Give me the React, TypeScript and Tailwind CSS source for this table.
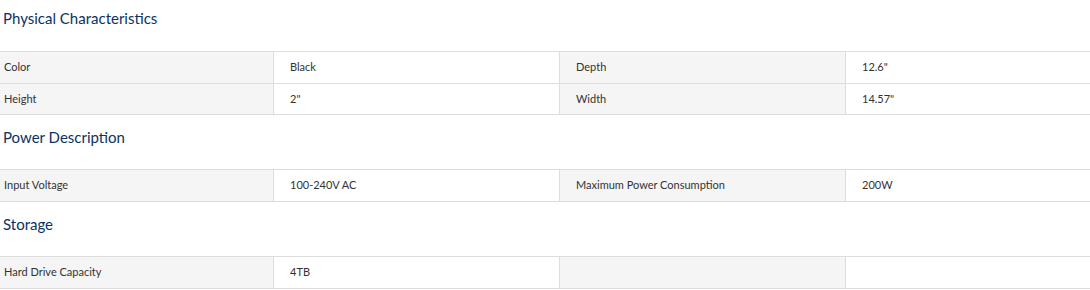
const sections = [
  {
    title: "Physical Characteristics",
    rows: [
      ["Color", "Black", "Depth", '12.6"'],
      ["Height", '2"', "Width", '14.57"'],
    ],
  },
  {
    title: "Power Description",
    rows: [["Input Voltage", "100-240V AC", "Maximum Power Consumption", "200W"]],
  },
  {
    title: "Storage",
    rows: [["Hard Drive Capacity", "4TB", "", ""]],
  },
];

export default function App() {
  return (
    <main className="w-[1090px] h-[290px] overflow-hidden bg-white font-['Lato',sans-serif] text-[#333333]">
      {sections.map((section, i) => (
        <section key={section.title}>
          {/* heading */}
          <h3
            className={
              i === 0
                ? "h-[51px] pt-[8px] pl-[3px] text-[15px] leading-[20px] text-[#0b3263]"
                : "h-[54px] pt-[12px] pl-[3px] text-[15px] leading-[20px] text-[#0b3263]"
            }
          >
            {section.title}
          </h3>

          {/* spec table */}
          <div className="border-t border-[#dddddd]">
            {section.rows.map((row, r) => (
              <div
                key={r}
                className={
                  r === 1
                    ? "grid grid-cols-[274px_286px_286px_1fr] h-[31px] border-b border-[#dddddd] text-[11px]"
                    : "grid grid-cols-[274px_286px_286px_1fr] h-[32px] border-b border-[#dddddd] text-[11px]"
                }
              >
                <div className="flex items-center pl-[4px] bg-[#f5f5f5] border-r border-[#dddddd]">
                  {row[0]}
                </div>
                <div className="flex items-center pl-[16px] bg-white border-r border-[#dddddd]">
                  {row[1]}
                </div>
                <div className="flex items-center pl-[16px] bg-[#f5f5f5] border-r border-[#dddddd]">
                  {row[2]}
                </div>
                <div className="flex items-center pl-[16px] bg-white">{row[3]}</div>
              </div>
            ))}
          </div>
        </section>
      ))}
    </main>
  );
}
